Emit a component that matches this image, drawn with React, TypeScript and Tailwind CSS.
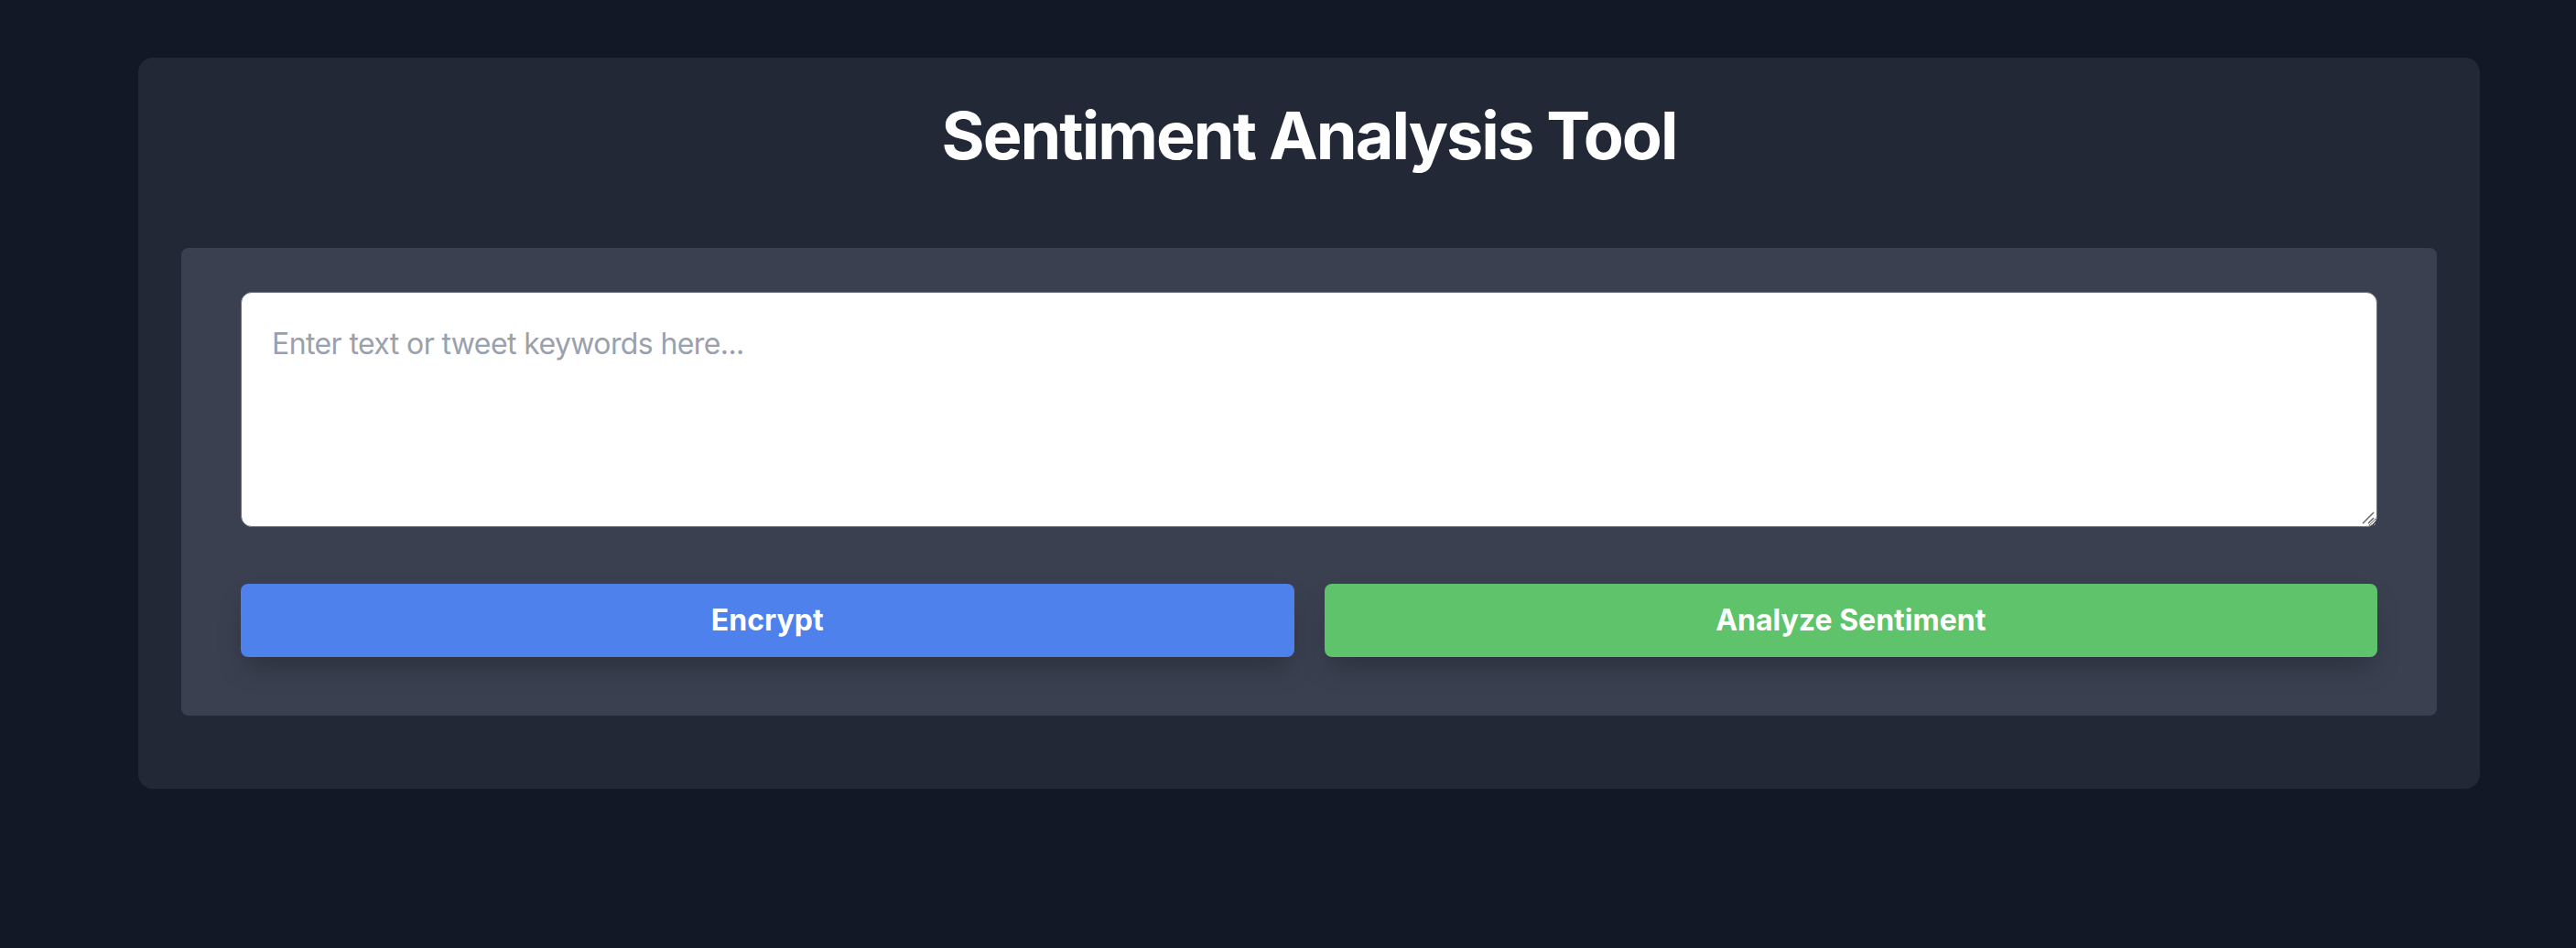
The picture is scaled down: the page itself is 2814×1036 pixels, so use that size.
import { useState } from 'react';

export default function App() {
  const [text, setText] = useState('');

  return (
    <div
      className="min-h-[1036px] w-full bg-[#121826] pt-[63px]"
      style={{ fontFamily: 'Inter, "Noto Sans", sans-serif' }}
    >
      <div className="ml-[151px] w-[2558px] rounded-[16px] bg-[#222836] px-[47px] pt-[45px] pb-[80px]">
        <h1 className="text-center text-[72px] font-bold leading-[80px] tracking-[-2px] text-white">
          Sentiment Analysis Tool
        </h1>

        <div className="mt-[83px] rounded-[8px] bg-[#3a4050] px-[65px] pt-[48px] pb-[64px]">
          <div className="relative">
            <textarea
              value={text}
              onChange={(e) => setText(e.target.value)}
              placeholder="Enter text or tweet keywords here..."
              className="block h-[257px] w-full resize-y rounded-[12px] border border-[#6b7280] bg-white px-[33px] py-[32px] text-[32px] leading-[48px] tracking-[-0.6px] text-gray-900 placeholder:text-[#9aa1ad] focus:outline-none"
            />
            {/* resize grip */}
            <svg
              className="pointer-events-none absolute right-[3px] bottom-[3px] h-[16px] w-[16px]"
              viewBox="0 0 16 16"
            >
              <path d="M15 3 L3 15" stroke="#6b6b6b" strokeWidth="1.6" />
              <path d="M15 9 L9 15" stroke="#6b6b6b" strokeWidth="1.6" />
            </svg>
          </div>

          <div className="mt-[62px] grid grid-cols-2 gap-[33px]">
            <button className="h-[80px] rounded-[8px] bg-[#4e81ec] text-[32px] font-bold text-white shadow-[0_16px_30px_-6px_rgba(0,0,0,0.25)]">
              Encrypt
            </button>
            <button className="h-[80px] rounded-[8px] bg-[#5ec36a] text-[32px] font-bold text-white shadow-[0_16px_30px_-6px_rgba(0,0,0,0.25)]">
              Analyze Sentiment
            </button>
          </div>
        </div>
      </div>
    </div>
  );
}
